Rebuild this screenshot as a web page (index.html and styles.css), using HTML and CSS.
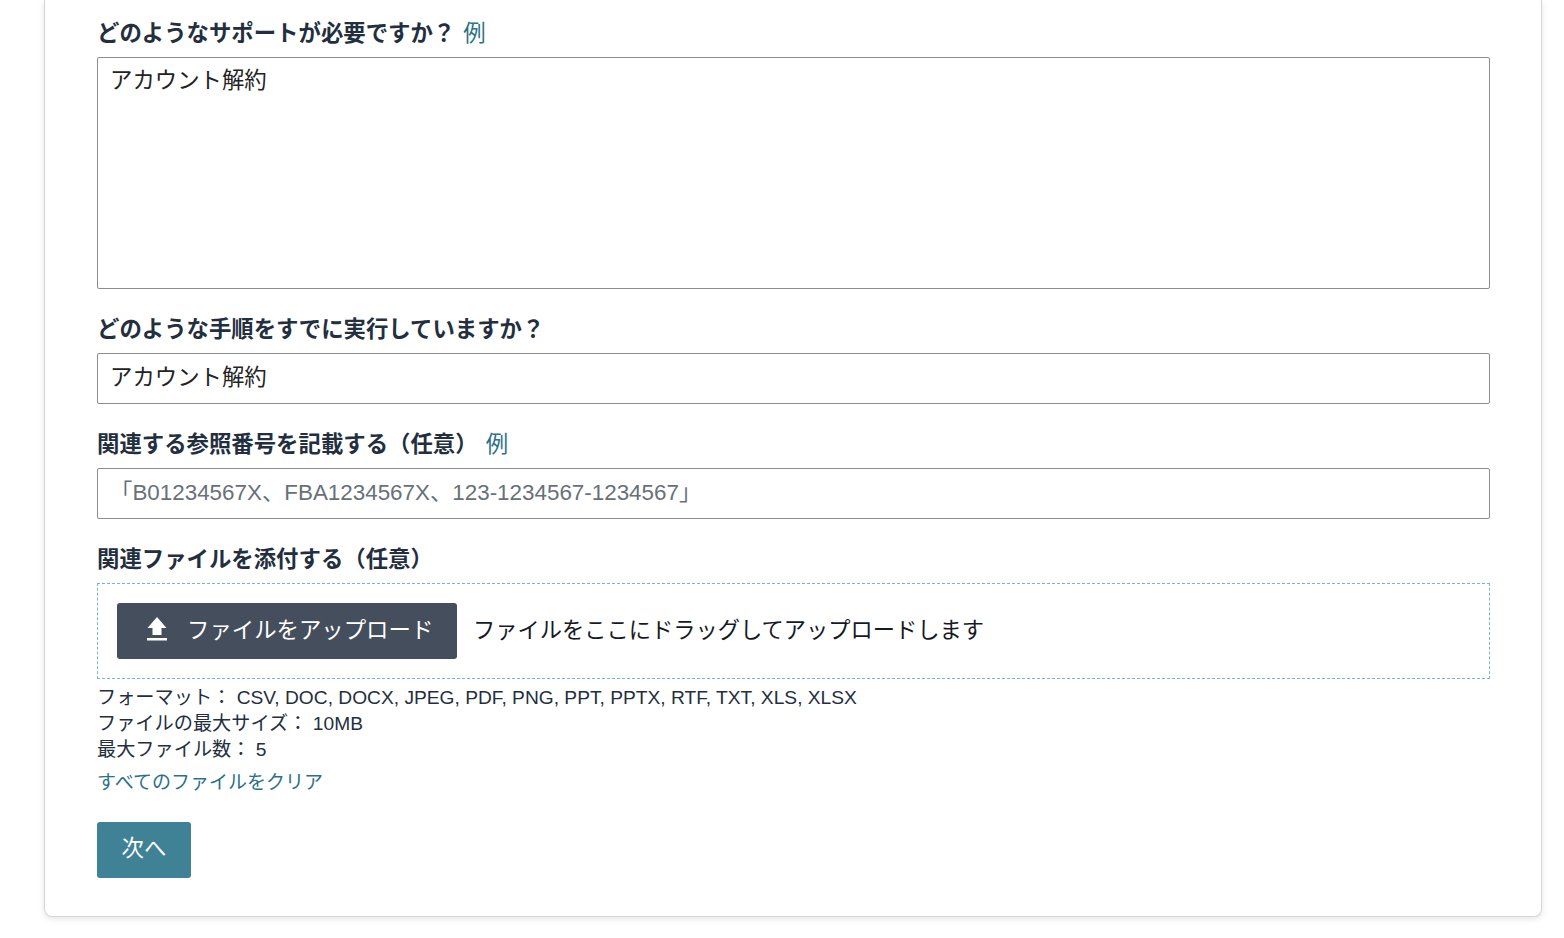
FILE: index.html
```html
<!DOCTYPE html>
<html lang="ja">
<head>
  <meta charset="UTF-8" />
  <meta name="viewport" content="width=device-width, initial-scale=1" />
  <title>サポート</title>
  <link rel="stylesheet" href="styles.css">
</head>
<body>

  <div class="card">
    <div class="field">
      <label class="label" for="need">どのようなサポートが必要ですか？<a class="example">例</a></label>
      <textarea class="textarea" id="need">アカウント解約</textarea>
    </div>

    <div class="field">
      <label class="label" for="steps">どのような手順をすでに実行していますか？</label>
      <input class="input" id="steps" type="text" value="アカウント解約" />
    </div>

    <div class="field">
      <label class="label" for="refs">関連する参照番号を記載する（任意）<a class="example">例</a></label>
      <input class="input input-ref" id="refs" type="text" placeholder="「B01234567X、FBA1234567X、123-1234567-1234567」" />
    </div>

    <div class="field">
      <div class="label">関連ファイルを添付する（任意）</div>
      <div class="dropzone">
        <button class="upload">
          <svg class="upload-icon" viewBox="0 0 20 24" width="20" height="24">
            <path d="M10 0 L19.5 11 H14.5 V18 H5.500 V11 H0.500 Z" fill="#fff"/>
            <rect x="0" y="21" width="20" height="2.500" fill="#fff"/>
          </svg>
          <span class="upload-text">ファイルをアップロード</span>
        </button>
        <span class="drop-text">ファイルをここにドラッグしてアップロードします</span>
      </div>
      <div class="rules">
        <div>フォーマット： <span>CSV, DOC, DOCX, JPEG, PDF, PNG, PPT, PPTX, RTF, TXT, XLS, XLSX</span></div>
        <div>ファイルの最大サイズ： <span>10MB</span></div>
        <div>最大ファイル数： <span>5</span></div>
      </div>
      <a class="clear">すべてのファイルをクリア</a>
    </div>

    <button class="next">次へ</button>
  </div>

</body>
</html>
```

FILE: styles.css
```css
* {
  margin: 0;
  padding: 0;
  box-sizing: border-box;
}

html, body {
  width: 100%;
  height: 100%;
  overflow: hidden;
  background: #fff;
  font-family: "Liberation Sans", "Noto Sans CJK JP", sans-serif;
  color: #16191f;
}

.card {
  width: 1498px;
  height: 917px;
  margin-left: 44px;
  padding: 17px 51px 0 52px;
  background: #fff;
  border: 1px solid #d5d5d5;
  border-top: none;
  border-radius: 0 0 8px 8px;
  box-shadow: 0 2px 6px rgba(0,0,0,0.1);
}

.field {
  margin-bottom: 24px;
}

.label {
  display: block;
  height: 32px;
  font-size: 22.4px;
  line-height: 34px;
  font-weight: bold;
  color: #232f3e;
  margin-bottom: 8px;
}

.example {
  font-weight: normal;
  color: #2b7189;
  margin-left: 8px;
  cursor: pointer;
}

.textarea, .input {
  display: block;
  width: 100%;
  font-family: inherit;
  font-size: 22.4px;
  color: #232323;
  border: 1px solid #8d8d8d;
  border-radius: 2px;
  padding: 0 12px;
  outline: none;
  background: #fff;
}

.textarea {
  height: 232px;
  padding-top: 7px;
  line-height: 32px;
  resize: none;
}

.input {
  height: 51px;
  padding-bottom: 8px;
}

.input-ref {
  padding-bottom: 2px;
}

.input::placeholder {
  color: #687078;
  opacity: 1;
}

.dropzone {
  display: flex;
  align-items: center;
  gap: 16px;
  height: 96px;
  padding: 0 19px;
  border: 1px dashed #7fb8b8;
}

.upload {
  display: flex;
  align-items: center;
  gap: 20px;
  width: 340px;
  height: 56px;
  padding-left: 30px;
  background: #444e5c;
  color: #fff;
  border: none;
  border-radius: 3px;
  font-family: inherit;
  font-size: 22.4px;
  cursor: pointer;
}

.upload-icon {
  flex-shrink: 0;
  margin-bottom: 4px;
}

.upload-text {
  padding-bottom: 7px;
}

.drop-text {
  font-size: 22.25px;
  padding-bottom: 7px;
}

.rules {
  margin-top: 6px;
  font-size: 19.2px;
  line-height: 26px;
  color: #232f3e;
}

.clear {
  display: block;
  margin-top: 7px;
  font-size: 19px;
  line-height: 26px;
  color: #2b7189;
  cursor: pointer;
}

.next {
  display: block;
  width: 94px;
  height: 56px;
  margin-top: 26px;
  padding-bottom: 8px;
  background: #3f8296;
  color: #fff;
  border: none;
  border-radius: 3px;
  font-family: inherit;
  font-size: 22.4px;
  cursor: pointer;
}
```
